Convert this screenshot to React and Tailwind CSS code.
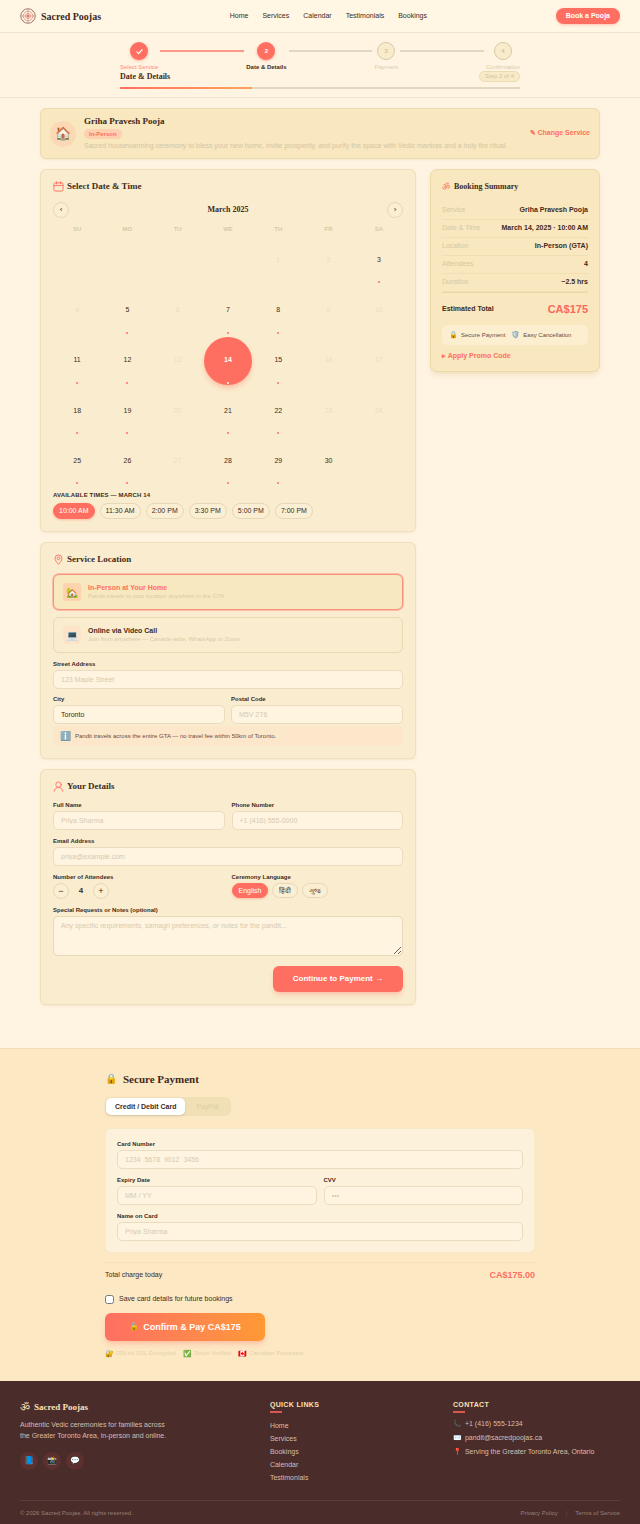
import { useState } from 'react';

const NAV_LINKS = ['Home', 'Services', 'Calendar', 'Testimonials', 'Bookings'];
const FOOTER_LINKS = ['Home', 'Services', 'Bookings', 'Calendar', 'Testimonials'];
const WEEKDAYS = ['SU', 'MO', 'TU', 'WE', 'TH', 'FR', 'SA'];
const AVAILABLE_DAYS = [3, 5, 7, 8, 11, 12, 14, 15, 18, 19, 21, 22, 25, 26, 28, 29];
const TIMES = ['10:00 AM', '11:30 AM', '2:00 PM', '3:30 PM', '5:00 PM', '7:00 PM'];
const LANGUAGES = ['English', 'हिंदी', 'ગુજ'];

const SUMMARY = [
  ['Service', 'Griha Pravesh Pooja'],
  ['Date & Time', 'March 14, 2025 · 10:00 AM'],
  ['Location', 'In-Person (GTA)'],
  ['Attendees', '4'],
  ['Duration', '~2.5 hrs'],
];

const LOCATIONS = [
  { id: 'home', icon: '🏡', title: 'In-Person at Your Home', text: 'Pandit travels to your location anywhere in the GTA' },
  { id: 'video', icon: '💻', title: 'Online via Video Call', text: 'Join from anywhere — Canada-wide, WhatsApp or Zoom' },
];

const serif = "font-['Liberation_Serif',serif] font-bold";

const MandalaLogo = () => (
  <svg viewBox="0 0 32 32" className="size-4" fill="none" stroke="#9a6a60" aria-hidden="true">
    <circle cx="16" cy="16" r="14.5" strokeWidth="1.8" />
    <circle cx="16" cy="16" r="9.5" stroke="#e88a7e" strokeWidth="1.4" />
    <circle cx="16" cy="16" r="5" stroke="#e88a7e" strokeWidth="1.4" />
    <path d="M16 2v28M2 16h28" strokeWidth="1" />
    <path d="M6 6l20 20M26 6L6 26" stroke="#e88a7e" strokeWidth="0.5" />
    <circle cx="16" cy="16" r="2.5" fill="#ff6f61" stroke="none" />
  </svg>
);

const CalendarIcon = () => (
  <svg viewBox="0 0 24 24" className="size-[11px]" fill="none" stroke="#ff6f61" strokeWidth="2" aria-hidden="true">
    <rect x="2" y="4" width="20" height="18" rx="3" />
    <path d="M2 10h20M7.5 1.500v5M16.500 1.500v5" strokeLinecap="round" />
  </svg>
);

const PinIcon = () => (
  <svg viewBox="0 0 24 24" className="size-[11px]" fill="none" stroke="#ff6f61" strokeWidth="2" aria-hidden="true">
    <path d="M12 22.500C8 18 4.500 14 4.500 9.500a7.500 7.500 0 0 1 15 0C19.500 14 16 18 12 22.500z" />
    <circle cx="12" cy="9.500" r="3" />
  </svg>
);

const PersonIcon = () => (
  <svg viewBox="0 0 24 24" className="size-[11px]" fill="none" stroke="#ff6f61" strokeWidth="2" strokeLinecap="round" aria-hidden="true">
    <circle cx="12" cy="8" r="6" />
    <path d="M2.500 22.500c1-5 4-8.500 9.500-8.500s8.500 3.500 9.500 8.500" />
  </svg>
);

const Header = () => (
  <header className="flex h-[33px] items-center justify-between border-b border-[#efe3cd] bg-[#fff6e3] px-5">
    <a href="#home" className={`flex items-center gap-[5px] text-[10px] ${serif}`}>
      <MandalaLogo />
      Sacred Poojas
    </a>
    <nav className="flex gap-[14px] text-[7px]">
      {NAV_LINKS.map((link) => (
        <a key={link} href={`#${link.toLowerCase()}`}>{link}</a>
      ))}
    </nav>
    <button className="h-4 rounded-full bg-[#ff6f61] px-[10px] text-[7px] font-bold text-white shadow-sm shadow-[#ff6f61]/30">
      Book a Pooja
    </button>
  </header>
);

const Step = ({ number, label, state }) => (
  <div className="flex flex-col items-center gap-[3px]">
    <div
      className={`flex size-[18px] items-center justify-center rounded-full text-[6px] font-bold ${
        state === 'todo'
          ? 'border border-[#d8c9a4] bg-[#f8eccd] text-[#d0c3a0]'
          : 'bg-[#ff6f61] text-white shadow-sm shadow-[#ff6f61]/40'
      }`}
    >
      {state === 'done' ? (
        <svg viewBox="0 0 12 12" className="size-[7px]" fill="none" stroke="currentColor" strokeWidth="2" strokeLinecap="round" strokeLinejoin="round" aria-hidden="true">
          <path d="M1.500 6.500l3 3 6-6.500" />
        </svg>
      ) : (
        number
      )}
    </div>
    <span
      className={`text-[6px] leading-[8px] ${
        state === 'done' ? 'text-[#ff8a7c]' : state === 'current' ? 'font-bold' : 'text-[#d8cbb0]'
      }`}
    >
      {label}
    </span>
  </div>
);

const Connector = ({ done }) => (
  <div className={`mt-2 h-[2px] flex-1 ${done ? 'bg-[#fb9a8b]' : 'bg-[#e2d8c2]'}`} />
);

const Progress = () => (
  <section className="border-b border-[#efe3cd] px-5 pt-[9px] pb-2">
    <div className="mx-auto max-w-[400px]">
      <div className="flex gap-[2px]">
        <Step number={1} label="Select Service" state="done" />
        <Connector done />
        <Step number={2} label="Date & Details" state="current" />
        <Connector />
        <Step number={3} label="Payment" state="todo" />
        <Connector />
        <Step number={4} label="Confirmation" state="todo" />
      </div>
      <div className="flex items-center justify-between">
        <h2 className={`text-[8px] leading-[10px] ${serif}`}>Date &amp; Details</h2>
        <span className="rounded-full border border-[#eadbb4] bg-[#f8eac6] px-[5px] text-[6px] leading-[9px] text-[#d3c4a0]">
          Step 2 of 4
        </span>
      </div>
      <div className="mt-[5px] h-[2px] bg-[#e2d8c2]">
        <div className="h-full w-[33%] bg-linear-to-r from-[#ff6f61] to-[#fda35c]" />
      </div>
    </div>
  </section>
);

const ServiceBanner = () => (
  <section className="flex items-center gap-2 rounded-md border border-[#ecdcb2] bg-[#f8e7bf] px-[9px] py-[7px] shadow-sm shadow-[#d9c38f]/20">
    <div className="flex size-[26px] items-center justify-center rounded-full bg-[#fcd9b6] text-[13px]">🏠</div>
    <div className="flex-1">
      <h1 className={`text-[9px] leading-[11px] ${serif}`}>Griha Pravesh Pooja</h1>
      <p className="mt-[2px] w-fit rounded-full bg-[#fdd0b0] px-[5px] text-[6px] leading-[10px] font-bold text-[#ff6f61]">
        In-Person
      </p>
      <p className="mt-[2px] text-[7px] leading-[10px] text-[#d3c6a6]">
        Sacred housewarming ceremony to bless your new home, invite prosperity, and purify the space with Vedic mantras and a holy fire ritual.
      </p>
    </div>
    <button className="text-[7px] font-bold text-[#ff6f61]">✎ Change Service</button>
  </section>
);

const Card = ({ icon, title, children }) => (
  <section className="rounded-md border border-[#efe0bb] bg-[#faedcf] px-3 pt-[10px] pb-3 shadow-sm shadow-[#d9c38f]/20">
    <h2 className={`flex items-center gap-[3px] text-[9px] leading-[12px] ${serif}`}>
      {icon}
      {title}
    </h2>
    {children}
  </section>
);

const Field = ({ id, label, className = '', ...props }) => (
  <div className={className}>
    <label htmlFor={id} className="block text-[6px] leading-[8px] font-bold">{label}</label>
    <input
      id={id}
      className="mt-[2px] block h-[19px] w-full rounded-[5px] border border-[#ebdcc0] bg-[#fef4e0] px-[7px] text-[7px] placeholder:text-[#d6cab2]"
      {...props}
    />
  </div>
);

const pill = (active) =>
  active
    ? 'rounded-full border border-[#ff6f61] bg-[#ff6f61] text-white shadow-sm shadow-[#ff6f61]/30'
    : 'rounded-full border border-[#e6d8b6] bg-[#fbefd3]';

const DateTimeCard = () => {
  const [day, setDay] = useState(14);
  const [time, setTime] = useState(TIMES[0]);

  return (
    <Card icon={<CalendarIcon />} title="Select Date & Time">
      <div className="mt-[10px] flex items-center justify-between">
        <button aria-label="Previous month" className={`size-4 text-[8px] leading-[14px] ${pill(false)}`}>‹</button>
        <h3 className={`text-[8px] leading-[10px] ${serif}`}>March 2025</h3>
        <button aria-label="Next month" className={`size-4 text-[8px] leading-[14px] ${pill(false)}`}>›</button>
      </div>
      <div className="mt-[6px] grid grid-cols-7 gap-[2px] text-center text-[7px]">
        {WEEKDAYS.map((name) => (
          <span key={name} className="text-[6px] leading-[10px] font-bold text-[#d6c8a6]">{name}</span>
        ))}
        {Array.from({ length: 30 }, (_, i) => i + 1).map((d) => {
          const available = AVAILABLE_DAYS.includes(d);
          const selected = d === day;
          return (
            <button
              key={d}
              disabled={!available}
              onClick={() => setDay(d)}
              className={`relative flex aspect-square items-center justify-center rounded-full ${d === 1 ? 'col-start-5' : ''} ${
                selected
                  ? 'bg-[#ff6f61] font-bold text-white shadow-md shadow-[#ff6f61]/30'
                  : available || d === 30
                    ? ''
                    : 'text-[#eaddbd]'
              }`}
            >
              {d}
              {available && (
                <span className={`absolute bottom-[1px] size-[2px] rounded-full ${selected ? 'bg-white' : 'bg-[#ff6f61]'}`} />
              )}
            </button>
          );
        })}
      </div>
      <h3 className="mt-[6px] text-[6px] leading-[8px] font-bold tracking-wide">AVAILABLE TIMES — MARCH 14</h3>
      <div className="mt-1 flex flex-wrap gap-[5px]">
        {TIMES.map((t) => (
          <button key={t} onClick={() => setTime(t)} className={`h-4 px-[5px] text-[7px] leading-[14px] ${pill(t === time)}`}>
            {t}
          </button>
        ))}
      </div>
    </Card>
  );
};

const LocationCard = () => {
  const [selected, setSelected] = useState('home');

  return (
    <Card icon={<PinIcon />} title="Service Location">
      <div className="mt-[9px] flex flex-col gap-[7px]">
        {LOCATIONS.map(({ id, icon, title, text }) => (
          <button
            key={id}
            aria-pressed={id === selected}
            onClick={() => setSelected(id)}
            className={`flex h-9 items-center gap-[7px] rounded-md border px-[9px] text-left ${
              id === selected ? 'border-[#f9907d] bg-[#f8e8bf] ring-1 ring-[#f9907d]/50' : 'border-[#e8d9b5]'
            }`}
          >
            <span className={`flex size-[18px] items-center justify-center rounded-[4px] text-[10px] ${id === selected ? 'bg-[#fcd3ae]' : 'bg-[#fde3c8]'}`}>
              {icon}
            </span>
            <span>
              <span className={`block text-[7px] leading-[9px] font-bold ${id === selected ? 'text-[#ff6f61]' : ''}`}>{title}</span>
              <span className="block text-[6px] leading-[9px] text-[#d8caa8]">{text}</span>
            </span>
          </button>
        ))}
      </div>
      <Field id="street" label="Street Address" placeholder="123 Maple Street" className="mt-[7px]" />
      <div className="mt-[6px] grid grid-cols-2 gap-[6px]">
        <Field id="city" label="City" defaultValue="Toronto" />
        <Field id="postal" label="Postal Code" placeholder="M5V 2T6" />
      </div>
      <p className="mt-[2px] flex h-5 items-center gap-1 rounded-[5px] bg-[#fde7cb] px-[7px] text-[6px] text-[#6b4a3c]">
        <span className="text-[9px]">ℹ️</span>
        Pandit travels across the entire GTA — no travel fee within 50km of Toronto.
      </p>
    </Card>
  );
};

const DetailsCard = () => {
  const [count, setCount] = useState(4);
  const [language, setLanguage] = useState('English');

  return (
    <Card icon={<PersonIcon />} title="Your Details">
      <div className="mt-[9px] grid grid-cols-2 gap-x-[7px] gap-y-[7px]">
        <Field id="name" label="Full Name" placeholder="Priya Sharma" />
        <Field id="phone" type="tel" label="Phone Number" placeholder="+1 (416) 555-0000" />
        <Field id="email" type="email" label="Email Address" placeholder="priya@example.com" className="col-span-2" />
        <div>
          <h3 className="text-[6px] leading-[8px] font-bold">Number of Attendees</h3>
          <div className="mt-[2px] flex h-4 items-center">
            <button aria-label="Fewer" onClick={() => setCount(Math.max(1, count - 1))} className={`size-4 text-[9px] leading-[14px] ${pill(false)}`}>−</button>
            <span className="w-6 text-center text-[8px] font-bold">{count}</span>
            <button aria-label="More" onClick={() => setCount(count + 1)} className={`size-4 text-[9px] leading-[14px] ${pill(false)}`}>+</button>
          </div>
        </div>
        <div>
          <h3 className="text-[6px] leading-[8px] font-bold">Ceremony Language</h3>
          <div className="mt-[2px] flex gap-1">
            {LANGUAGES.map((lang) => (
              <button key={lang} onClick={() => setLanguage(lang)} className={`h-[15px] px-[6px] text-[7px] leading-[13px] ${pill(lang === language)}`}>
                {lang}
              </button>
            ))}
          </div>
        </div>
        <div className="col-span-2">
          <label htmlFor="notes" className="block text-[6px] leading-[8px] font-bold">Special Requests or Notes (optional)</label>
          <textarea
            id="notes"
            placeholder="Any specific requirements, samagri preferences, or notes for the pandit..."
            className="mt-[2px] block h-10 w-full resize-y rounded-[5px] border border-[#e6d8b8] bg-[#fef4e0] px-[7px] py-1 text-[7px] leading-[10px] placeholder:text-[#d6cab2]"
          />
        </div>
      </div>
      <div className="mt-[10px] flex justify-end">
        <button className="h-[26px] rounded-md bg-[#ff6f61] px-5 text-[8px] font-bold text-white shadow-md shadow-[#ff6f61]/25">
          Continue to Payment →
        </button>
      </div>
    </Card>
  );
};

const Summary = () => (
  <aside className="rounded-[7px] border border-[#ecd9a8] bg-[#f9e7bf] px-[11px] pt-[11px] pb-[10px] shadow-md shadow-[#d9c38f]/30">
    <h2 className={`flex items-center gap-1 text-[8px] leading-[12px] ${serif}`}>
      <span className="text-[9px] font-normal text-[#ff6f61]">ॐ</span>
      Booking Summary
    </h2>
    <dl className="mt-[9px] border-b border-[#e9d8ac]">
      {SUMMARY.map(([term, value]) => (
        <div key={term} className="flex h-[18px] items-center justify-between border-b border-[#f0dfb4] text-[7px]">
          <dt className="text-[#d6c79f]">{term}</dt>
          <dd className="font-bold">{value}</dd>
        </div>
      ))}
    </dl>
    <div className="mt-[9px] flex h-[14px] items-center justify-between font-bold">
      <span className="text-[7px]">Estimated Total</span>
      <span className="text-[11px] text-[#f9695c]">CA$175</span>
    </div>
    <div className="mt-[9px] flex h-5 items-center gap-[6px] rounded-[5px] bg-[#fcefd0] px-[7px] text-[6px] text-[#6b4a3c]">
      <span className="flex items-center gap-[3px]"><span className="text-[7px]">🔒</span>Secure Payment</span>
      <span className="flex items-center gap-[3px]"><span className="text-[7px]">🛡️</span>Easy Cancellation</span>
    </div>
    <button className="mt-[6px] block text-[7px] leading-[10px] font-bold text-[#ff6f61]">▸ Apply Promo Code</button>
  </aside>
);

const Payment = () => (
  <section className="mt-[43px] border-t border-[#f0dcb5] bg-[#fde8c4] px-5 pt-[23px] pb-[23px]">
    <div className="mx-auto max-w-[430px]">
      <h2 className={`flex items-center gap-[6px] text-[11px] leading-[14px] ${serif}`}>
        <span className="text-[10px]">🔒</span>
        Secure Payment
      </h2>
      <div className="mt-[11px] flex h-[19px] w-fit rounded-md bg-[#f1dfb6] p-[1px] text-[7px] font-bold">
        <button className="rounded-[5px] bg-white px-[9px] shadow-sm">Credit / Debit Card</button>
        <button className="px-[11px] font-normal text-[#e0cda2]">PayPal</button>
      </div>
      <div className="mt-3 grid grid-cols-2 gap-x-[7px] gap-y-[7px] rounded-md border border-[#f7e9c9] bg-[#fcf2dc] p-[11px]">
        <Field id="card" label="Card Number" placeholder="1234  5678  9012  3456" className="col-span-2" />
        <Field id="expiry" label="Expiry Date" placeholder="MM / YY" />
        <Field id="cvv" label="CVV" placeholder="•••" />
        <Field id="holder" label="Name on Card" placeholder="Priya Sharma" className="col-span-2" />
      </div>
      <div className="mt-[9px] flex items-center justify-between border-t border-[#f3dfb8] pt-[6px] leading-[12px]">
        <span className="text-[7px]">Total charge today</span>
        <span className="text-[9px] font-bold text-[#ff6f61]">CA$175.00</span>
      </div>
      <label className="mt-[13px] flex items-center gap-[5px] text-[7px] leading-[10px]">
        <input type="checkbox" className="size-[9px]" />
        Save card details for future bookings
      </label>
      <button className="mt-[9px] flex h-7 w-40 items-center justify-center gap-1 rounded-md bg-linear-to-r from-[#ff6f61] to-[#ff9933] text-[9px] font-bold text-white shadow-md shadow-[#ff6f61]/25">
        <span className="text-[8px]">🔒</span>
        Confirm &amp; Pay CA$175
      </button>
      <ul className="mt-2 flex gap-[7px] text-[6px] leading-[9px] text-[#e3d1a8]">
        <li className="flex gap-[2px]"><span className="text-[7px]">🔐</span>256-bit SSL Encrypted</li>
        <li className="flex gap-[2px]"><span className="text-[7px]">✅</span>Stripe Verified</li>
        <li className="flex gap-[2px]"><span className="text-[7px]">🇨🇦</span>Canadian Processor</li>
      </ul>
    </div>
  </section>
);

const FooterTitle = ({ children }) => (
  <>
    <h3 className="text-[7px] leading-[8px] font-bold tracking-wider text-[#fde0b8]">{children}</h3>
    <div className="mt-[2px] h-[2px] w-3 bg-[#d9574e]" />
  </>
);

const Footer = () => (
  <footer className="bg-[#4a2c2a] px-5 pt-5 text-[#d3bfb3]">
    <div className="grid grid-cols-[1.4fr_1fr_1fr] gap-4 border-b border-[#5c3d39] pb-4">
      <div>
        <p className={`flex items-center gap-1 text-[9px] leading-[12px] text-[#fde0b8] ${serif}`}>
          <span className="text-[11px] font-normal">ॐ</span>
          Sacred Poojas
        </p>
        <p className="mt-[6px] text-[7px] leading-[11px]">
          Authentic Vedic ceremonies for families across
          <br />
          the Greater Toronto Area, in-person and online.
        </p>
        <div className="mt-[11px] flex gap-[5px]">
          {[['Facebook', '📘'], ['Instagram', '📸'], ['WhatsApp', '💬']].map(([name, icon]) => (
            <a key={name} href="#social" aria-label={name} className="flex size-[18px] items-center justify-center rounded-full bg-[#5c302e] text-[8px]">
              {icon}
            </a>
          ))}
        </div>
      </div>
      <div>
        <FooterTitle>QUICK LINKS</FooterTitle>
        <ul className="mt-[6px] text-[7px] leading-[13px]">
          {FOOTER_LINKS.map((link) => (
            <li key={link}><a href={`#${link.toLowerCase()}`}>{link}</a></li>
          ))}
        </ul>
      </div>
      <div>
        <FooterTitle>CONTACT</FooterTitle>
        <ul className="mt-[6px] flex flex-col gap-[4px] text-[7px] leading-[10px]">
          <li className="flex gap-[3px]"><span className="w-[9px]">📞</span>+1 (416) 555-1234</li>
          <li className="flex gap-[3px]"><span className="w-[9px]">✉️</span>pandit@sacredpoojas.ca</li>
          <li className="flex gap-[3px]"><span className="w-[9px]">📍</span>Serving the Greater Toronto Area, Ontario</li>
        </ul>
      </div>
    </div>
    <div className="flex h-[25px] items-center justify-between text-[6px] text-[#96807a]">
      <p>© 2026 Sacred Poojas. All rights reserved.</p>
      <div className="flex gap-2">
        <a href="#privacy">Privacy Policy</a>
        <span className="text-[#6e504b]">|</span>
        <a href="#terms">Terms of Service</a>
      </div>
    </div>
  </footer>
);

const App = () => (
  <div className="bg-[#fff4e2] font-['Liberation_Sans',sans-serif] text-[#412a20]">
    <Header />
    <Progress />
    <main className="flex flex-col gap-[10px] px-10 pt-[10px]">
      <ServiceBanner />
      <div className="grid grid-cols-[1fr_170px] items-start gap-[14px]">
        <div className="flex flex-col gap-[10px]">
          <DateTimeCard />
          <LocationCard />
          <DetailsCard />
        </div>
        <Summary />
      </div>
    </main>
    <Payment />
    <Footer />
  </div>
);

export default App;
